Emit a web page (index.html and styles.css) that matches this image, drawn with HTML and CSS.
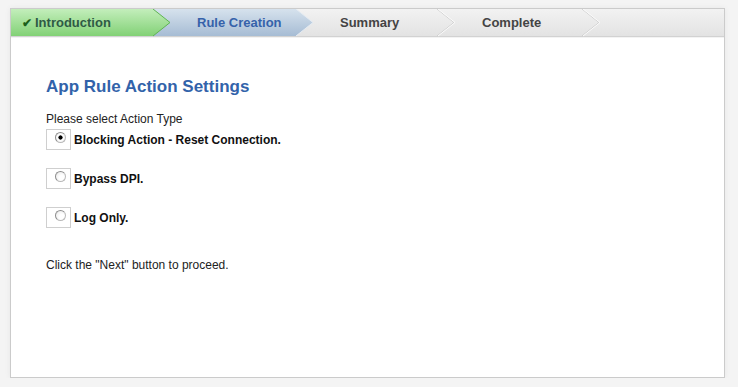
FILE: index.html
```html
<!DOCTYPE html>
<html lang="en">
<head>
    <meta charset="UTF-8">
    <title>App Rule Wizard</title>
    <link rel="stylesheet" href="styles.css">
</head>
<body>

<div class="wizard">
    <ul class="steps">
        <li class="step done">
            <span class="check">&#10004;</span>Introduction
            <svg class="arrow" width="19" height="28" viewBox="0 0 19 28">
                <defs>
                    <linearGradient id="gGreen" x1="0" y1="0" x2="0" y2="1">
                        <stop offset="0" stop-color="#c3eebb"/>
                        <stop offset="1" stop-color="#82d176"/>
                    </linearGradient>
                </defs>
                <polygon points="0,0 1,0 18,13.5 1,27 0,27" fill="url(#gGreen)"/>
                <polyline points="1,0 18,13.5 1,27" fill="none" stroke="#5fb552" stroke-width="1"/>
            </svg>
        </li>
        <li class="step current">
            Rule Creation
            <svg class="arrow" width="19" height="28" viewBox="0 0 19 28">
                <defs>
                    <linearGradient id="gBlue" x1="0" y1="0" x2="0" y2="1">
                        <stop offset="0" stop-color="#d6e2ed"/>
                        <stop offset="1" stop-color="#a6bcd4"/>
                    </linearGradient>
                </defs>
                <polygon points="0,0 1,0 18,13.5 1,27 0,27" fill="url(#gBlue)"/>
                <polyline points="1,0 18,13.5 1,27" fill="none" stroke="#e4ebf2" stroke-width="1"/>
            </svg>
        </li>
        <li class="step">
            Summary
            <svg class="arrow" width="19" height="28" viewBox="0 0 19 28">
                <polyline points="0,0 17,13.5 0,27" fill="none" stroke="#cfcfcf" stroke-width="1"/>
                <polyline points="1,0 18,13.5 1,27" fill="none" stroke="#fbfbfb" stroke-width="1"/>
            </svg>
        </li>
        <li class="step">
            Complete
            <svg class="arrow" width="19" height="28" viewBox="0 0 19 28">
                <polyline points="0,0 17,13.5 0,27" fill="none" stroke="#cfcfcf" stroke-width="1"/>
                <polyline points="1,0 18,13.5 1,27" fill="none" stroke="#fbfbfb" stroke-width="1"/>
            </svg>
        </li>
    </ul>

    <div class="content">
        <h2 class="title">App Rule Action Settings</h2>
        <p class="prompt">Please select Action Type</p>

        <label class="option">
            <span class="radioBox"><input type="radio" name="action" checked></span>
            Blocking Action - Reset Connection.
        </label>
        <label class="option">
            <span class="radioBox"><input type="radio" name="action"></span>
            Bypass DPI.
        </label>
        <label class="option">
            <span class="radioBox"><input type="radio" name="action"></span>
            Log Only.
        </label>

        <p class="hint">Click the "Next" button to proceed.</p>
    </div>
</div>

</body>
</html>
```

FILE: styles.css
```css
body {
    margin: 0;
    background: #f4f4f4;
    font-family: "Liberation Sans", Arial, sans-serif;
    color: #222;
}

.wizard {
    box-sizing: border-box;
    width: 715px;
    height: 370px;
    margin: 8px 0 0 10px;
    background: #fff;
    border: 1px solid #cbcbcb;
    box-shadow: 0 0 6px rgba(0, 0, 0, 0.06);
}

.steps {
    display: flex;
    margin: 0;
    padding: 0;
    list-style: none;
    height: 27px;
    background: linear-gradient(#f2f2f2, #e3e3e3);
    border-bottom: 1px solid #d2d2d2;
    box-shadow: 0 1px 0 #f3f3f3;
}

.step {
    position: relative;
    box-sizing: border-box;
    width: 143px;
    padding-left: 44px;
    font-size: 13px;
    font-weight: bold;
    line-height: 27px;
    color: #444;
    white-space: nowrap;
}

.step:nth-child(1) { z-index: 4; }
.step:nth-child(2) { z-index: 3; }
.step:nth-child(3) { z-index: 2; width: 142px; }
.step:nth-child(4) { z-index: 1; width: 145px; }

.step.done {
    width: 142px;
    padding-left: 11px;
    color: #2f5a45;
    background: linear-gradient(#c3eebb, #82d176);
}

.step.current {
    color: #3662aa;
    background: linear-gradient(#d6e2ed, #a6bcd4);
}

.check {
    margin-right: 3px;
    font-size: 12px;
    color: #1b601b;
}

.arrow {
    position: absolute;
    top: 0;
    right: -18px;
    display: block;
}

.content {
    padding: 40px 0 0 35px;
}

.title {
    margin: 0;
    font-size: 17px;
    line-height: 20px;
    color: #3263aa;
}

.prompt {
    margin: 15px 0 0;
    font-size: 12px;
    line-height: 14px;
    color: #222;
}

.option {
    display: flex;
    align-items: center;
    height: 21px;
    margin-top: 3px;
    margin-bottom: 18px;
    font-size: 12px;
    font-weight: bold;
    color: #111;
}

.option + .option {
    margin-top: 0;
}

.radioBox {
    box-sizing: border-box;
    width: 25px;
    height: 21px;
    margin-right: 3px;
    border: 1px solid #cfcfcf;
    background: #fff;
}

.radioBox input {
    appearance: none;
    -webkit-appearance: none;
    display: block;
    box-sizing: border-box;
    width: 11px;
    height: 11px;
    margin: 2px 0 0 8px;
    border-radius: 50%;
    border: 1px solid #b9b9b9;
    border-top-color: #8d8d8d;
    border-left-color: #8d8d8d;
    background: radial-gradient(circle at 65% 65%, #ffffff 30%, #e6e6e6 100%);
}

.radioBox input:checked {
    background: radial-gradient(circle, #000 0, #000 1.8px, #fff 2.4px, #eee 100%);
}

.hint {
    margin: 30px 0 0;
    font-size: 12px;
    line-height: 14px;
    color: #222;
}
```
